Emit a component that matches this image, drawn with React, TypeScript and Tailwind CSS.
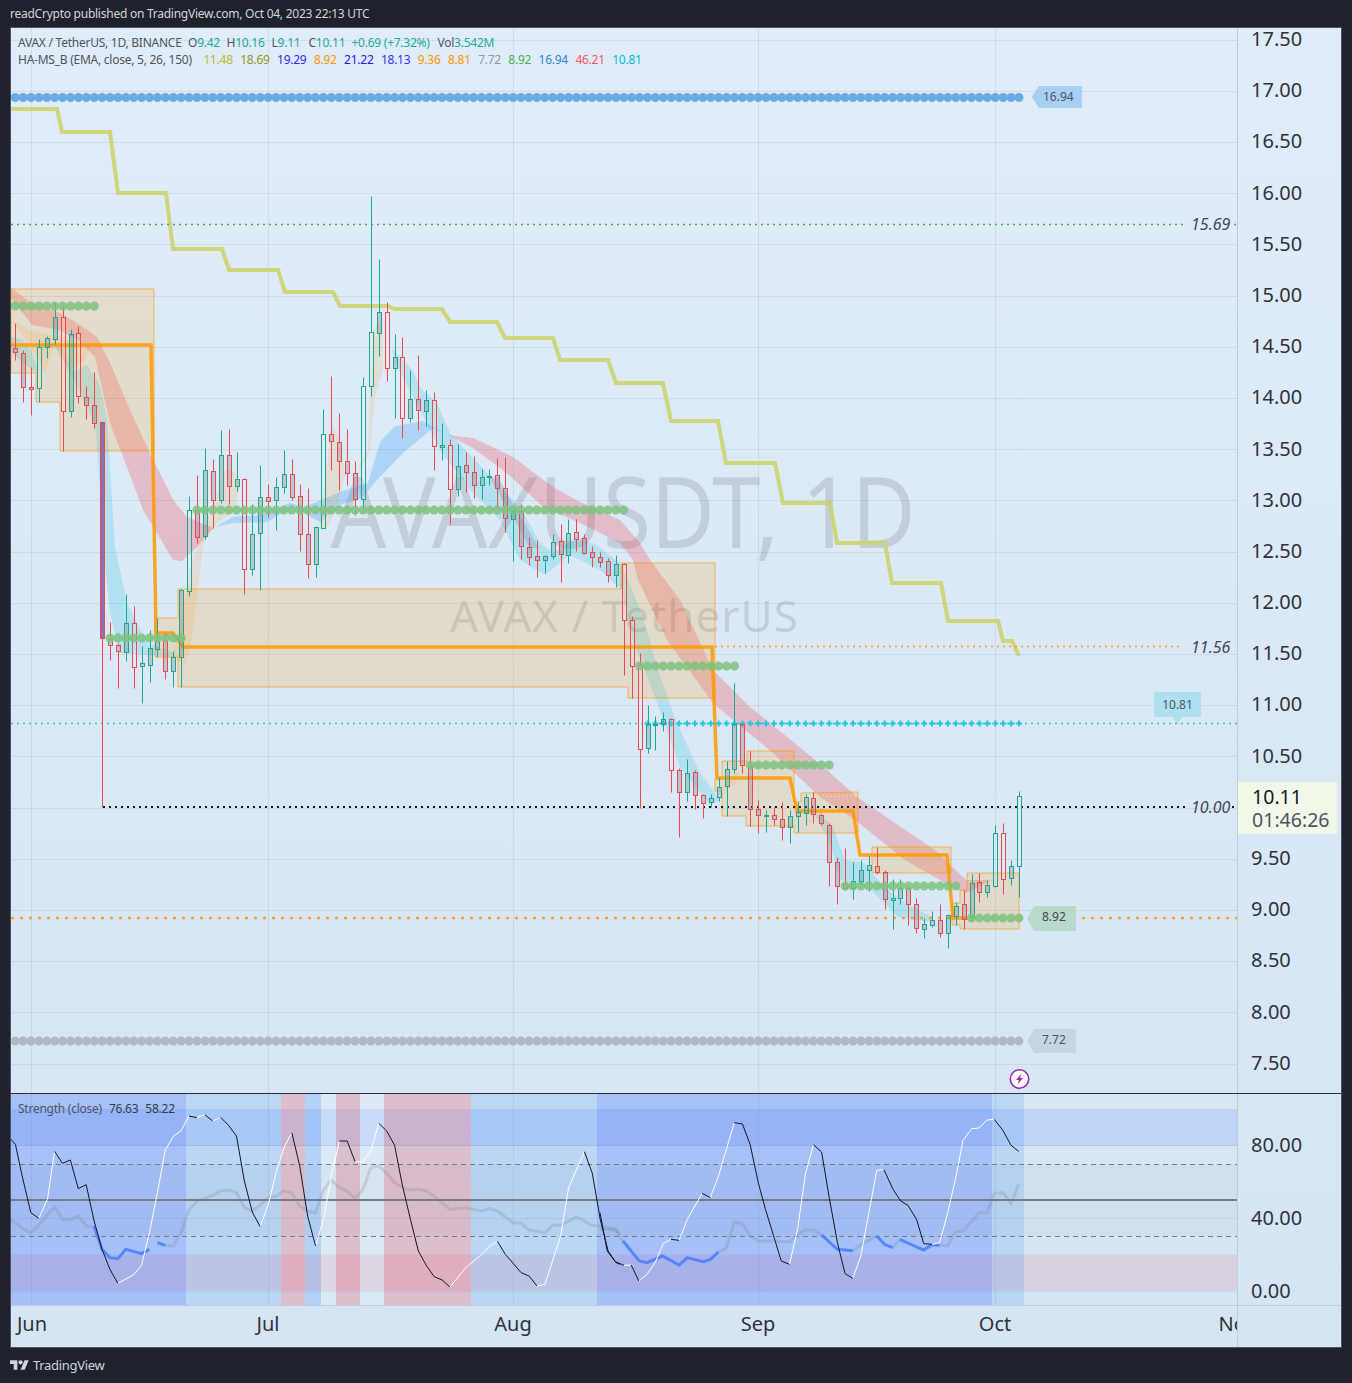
import React from "react";

type C = [number, number, number, number, number];
// colour (0 green, 1 red), wick top, body top, body bottom, wick bottom; first entry is day index -2
const raw: C[] = [
[1,323,348,352,360],[1,350,353,387,402],[1,367,387,389,415],[0,339,347,388,402],[0,336,338,347,358],[0,302,317,339,344],[1,305,317,411,451],[0,329,334,411,417],[1,326,333,396,403],[1,386,397,405,419],[1,372,405,423,428],
[1,422,422,638,807],[1,622,639,645,660],[1,643,645,651,688],[0,594,623,652,661],[1,606,623,667,688],[0,646,663,666,703],[0,630,648,665,682],[0,618,641,649,657],[1,633,640,671,679],[0,651,657,671,687],[0,589,590,657,687],
[0,496,510,591,596],[1,475,510,537,543],[0,448,470,536,539],[1,459,471,500,528],[0,430,455,500,503],[1,429,455,486,504],[0,452,479,486,491],[1,478,479,569,594],[0,504,534,569,575],[0,465,497,533,590],[1,484,497,501,517],[0,477,487,500,530],[0,450,474,487,493],[1,459,474,497,500],[1,484,496,534,551],[1,488,534,564,578],[0,526,527,564,577],[0,409,434,528,528],[1,376,434,441,470],[1,413,442,461,490],
[1,429,461,473,485],[1,461,473,499,515],[0,377,386,499,511],[0,196,332,386,396],[0,259,312,333,356],[1,302,312,368,381],[0,334,357,368,418],[1,337,357,418,438],[0,370,399,418,422],[1,355,399,410,430],[0,390,400,411,426],[1,392,400,446,470],[0,423,445,447,460],[1,439,445,489,524],[0,444,466,489,496],[1,452,465,472,492],[1,456,472,485,498],[0,469,477,485,499],[0,469,476,477,485],[1,458,475,488,508],[1,457,488,518,532],[0,510,511,519,561],[1,504,511,546,559],[1,537,547,557,565],[1,540,556,560,577],[0,555,556,560,573],[0,534,542,556,559],[1,524,541,554,582],[0,519,533,555,563],[1,519,532,539,551],[1,534,538,553,554],[1,546,552,557,567],[1,552,557,562,567],[1,558,561,575,582],[0,555,564,575,587],
[1,563,564,620,675],[1,616,620,666,698],[1,653,665,749,808],[0,705,724,748,753],[0,716,724,725,750],[0,712,719,724,731],[1,718,719,770,792],[1,768,770,792,837],[0,759,773,792,801],[1,770,772,795,809],[1,794,795,803,818],[0,794,798,802,807],[0,778,787,797,801],[0,761,769,786,816],[0,683,724,769,773],[1,723,724,765,773],[1,751,766,809,826],[1,800,809,815,833],[0,810,815,816,832],[1,807,815,819,825],[1,802,819,827,840],[0,810,816,827,843],[0,802,812,816,832],[0,794,797,813,825],[1,792,798,814,823],[1,813,815,823,825],
[1,825,827,865,890],[1,860,865,890,908],[1,851,888,892,894],[0,865,884,892,903],[0,863,873,884,888],[0,859,868,873,895],[1,850,869,875,877],[1,873,875,903,913],[0,882,902,904,933],[0,882,892,902,908],[1,889,892,908,929],[1,902,908,932,937],[0,922,928,933,942],[0,915,924,929,931],[1,908,924,937,941],[0,918,919,937,953],[0,906,910,920,929],[1,894,908,923,933],[0,877,886,921,924],[1,876,885,896,906],[0,883,889,896,901],[0,827,836,890,891],[1,825,836,882,898],[0,863,869,881,889],[0,793,798,869,901],
];

const dayX = (i: number) => 31 + 7.904 * i;
const greyBodies = new Set([5, 19, 22, 24, 25, 34, 48, 54, 68, 78, 82, 88, 89, 90, 91]);
const fixY = (i: number, y: number) => (i >= 101 ? 690 + (y - 690) * 0.9823 : y);

function Candles() {
  return (
    <g>
      {raw.map((c, k) => {
        const i = k - 2;
        const x = Math.round(dayX(i)) + 0.5;
        const col = c[0] ? "#f0474f" : "#1ea692";
        const [wt, bt, bb, wb] = [c[1], c[2], c[3], c[4]].map((v) => Math.round(fixY(i, v)) + 0.5);
        const hollow = bb - bt >= 38 && !greyBodies.has(i);
        const fill = i === 9 ? "#7f74b8" : hollow ? "rgba(255,255,255,.1)" : "rgba(120,123,134,.32)";
        return (
          <g key={k}>
            <line x1={x} x2={x} y1={wt} y2={bt} stroke={col} />
            <line x1={x} x2={x} y1={bb} y2={wb} stroke={col} />
            <rect x={x - 2} y={bt} width={4} height={Math.max(bb - bt, 1)} fill={fill} stroke={col} />
          </g>
        );
      })}
    </g>
  );
}

const range = (a: number, b: number) => Array.from({ length: b - a + 1 }, (_, k) => a + k);

function Dots({ a, b, y, r, fill }: { a: number; b: number; y: number; r: number; fill: string }) {
  return (
    <g fill={fill}>
      {range(a, b).map((i) => (
        <circle key={i} cx={dayX(i)} cy={y} r={r} />
      ))}
    </g>
  );
}

const RED1 = "11,288 33,304 60,313 83,327 97,337 110,363 130,410 150,453 173,500 187,517 213,528 197,547 182,561 173,560 143,510 127,467 110,423 95,357 80,342 60,330 43,327 32,325 11,298";
const RED2 = "448,435 473,438 513,457 553,487 580,502 620,520 640,543 650,560 680,600 713,670 750,707 797,745 827,770 857,797 895,823 935,850 966,880 993,880 986,883 966,893 952,887 905,860 854,819 820,797 773,753 733,720 713,703 667,640 638,580 633,560 620,543 580,523 543,507 507,473 473,448";
const CY1 = "87,365 100,385 107,420 115,547 127,603 147,643 173,652 176,657 120,653 110,613 103,547 100,487 95,423 70,373 55,347 62,345 72,372";
const CY0 = "11,337 22,339 32,352 40,375 25,365 11,352";
const CY2 = "392,348 412,370 422,390 437,403 450,433 487,473 522,510 540,543 553,553 573,540 593,543 620,563 627,577 643,617 657,667 677,723 700,773 720,800 710,805 680,767 657,703 633,640 622,590 600,570 570,555 545,575 520,560 500,520 470,490 440,450 420,410 395,362";
const CY3 = "813,807 833,827 845,860 864,863 884,887 905,903 932,917 928,922 898,917 871,890 840,880 830,843 815,815";
const BLUE = "215,527 233,517 260,515 290,503 305,507 340,492 368,483 380,442 395,426 423,421 448,435 433,428 403,453 377,480 362,498 340,505 320,522 293,507 267,522 233,523";
const PEACH = [
  "172,657 181,620 190,570 203,530 215,500 225,470 235,472 240,485 235,510 215,525 203,545 197,600 190,650 185,665",
  "319,525 325,480 332,425 340,440 345,475 336,510 325,530",
  "358,467 368,450 373,330 383,317 383,370 375,397 370,450 360,470",
  "11,320 30,345 45,372 55,345 70,370 85,360 90,345 30,330",
  "722,786 740,770 735,785 725,790",
];
const BOXES = [
  "11,289 154,289 154,451 60,451 60,402 36,402 36,373 11,373",
  "155,618 178,618 178,589 621,589 621,563 715,563 715,698 628,698 628,687 178,687 178,657 155,657",
  "715,778 722,778 722,761 747,761 747,751 794,751 794,802 801,802 801,793 858,792 858,833 794,833 794,826 746,826 746,816 722,816 722,791 715,791",
  "872,847 951,847 951,873 872,873",
  "952,903 960,903 960,890 967,890 967,873 1019,873 1019,925 1019,929 960,929 960,925 952,925",
];
const ORANGE = "11,345 151,345 156,633 173,633 183,647 712,647 717,778 790,778 797,811 853,811 860,855 947,855 953,918 968,918";
const OLIVE = "11,109 57,109 62,132 110,132 118,193 166,193 173,249 222,249 229,270 278,270 285,292 333,292 340,306 388,306 394,309 442,309 450,322 497,322 505,338 553,338 560,360 608,360 616,383 663,383 671,421 718,421 726,463 775,463 783,503 830,503 837,543 885,543 892,583 941,583 948,621 998,621 1003,641 1012,641 1019,656";

function MainChart() {
  const grid = range(0, 21).map((k) => 39.5 + k * 51.2);
  return (
    <svg viewBox="11 28 1227 1065" width={1227} height={1065} className="block">
      {grid.map((y) => (
        <line key={y} x1={11} x2={1238} y1={Math.round(y) + 0.5} y2={Math.round(y) + 0.5} stroke="#2a2e39" strokeOpacity={0.08} />
      ))}
      {[31, 268, 513, 758, 995].map((x) => (
        <line key={x} x1={x + 0.5} x2={x + 0.5} y1={28} y2={1093} stroke="#2a2e39" strokeOpacity={0.08} />
      ))}
      <text x={623} y={548} textAnchor="middle" fontSize={98} textLength={585} lengthAdjust="spacingAndGlyphs" fill="#787b86" fillOpacity={0.25} fontFamily="'Noto Sans',sans-serif">AVAXUSDT, 1D</text>
      <text x={624} y={632} textAnchor="middle" fontSize={44} textLength={348} fill="#787b86" fillOpacity={0.25} fontFamily="'Noto Sans',sans-serif">AVAX / TetherUS</text>

      <polygon points={CY0} fill="#00bcd4" fillOpacity={0.18} />
      <polygon points={CY1} fill="#00bcd4" fillOpacity={0.18} />
      <polygon points={CY2} fill="#00bcd4" fillOpacity={0.18} />
      <polygon points={CY3} fill="#00bcd4" fillOpacity={0.18} />
      <polygon points={BLUE} fill="#2196f3" fillOpacity={0.25} />
      {PEACH.map((p) => (
        <polygon key={p} points={p} fill="#ff9800" fillOpacity={0.14} />
      ))}
      <polygon points={RED1} fill="#f23645" fillOpacity={0.25} />
      <polygon points={RED2} fill="#f23645" fillOpacity={0.25} />
      {BOXES.map((p) => (
        <polygon key={p} points={p} fill="#ff9800" fillOpacity={0.17} stroke="#ff9800" strokeOpacity={0.65} />
      ))}
      <polyline points={ORANGE} fill="none" stroke="#ff9800" strokeOpacity={0.85} strokeWidth={3.5} />
      <polyline points={OLIVE} fill="none" stroke="#ccd36b" strokeOpacity={0.9} strokeWidth={4} />

      <line x1={11} x2={1185} y1={224.5} y2={224.5} stroke="#43ae50" strokeWidth={1.5} strokeDasharray="2 4" />
      <line x1={1234} x2={1238} y1={224.5} y2={224.5} stroke="#43ae50" strokeWidth={1.5} strokeDasharray="2 4" />
      <line x1={715} x2={1183} y1={646.5} y2={646.5} stroke="#ff9800" strokeWidth={1.5} strokeDasharray="2 4" />
      <line x1={11} x2={1238} y1={723.5} y2={723.5} stroke="#26c6da" strokeWidth={1.5} strokeDasharray="2 4" />
      <line x1={11} x2={1238} y1={796} y2={796} stroke="#ffffff" strokeOpacity={0.6} strokeDasharray="1 3" />
      <line x1={103} x2={1185} y1={807} y2={807} stroke="#131722" strokeWidth={2} strokeDasharray="2 4" />
      <line x1={1232} x2={1238} y1={807} y2={807} stroke="#131722" strokeWidth={2} strokeDasharray="2 4" />
      <line x1={11} x2={1238} y1={918} y2={918} stroke="#f5a233" strokeWidth={2.5} strokeDasharray="3 6" />

      <Dots a={-3} b={125} y={97.5} r={4.5} fill="#6caae3" />
      <Dots a={-3} b={125} y={1041} r={4.5} fill="#b1b8c3" />
      <g stroke="#26c6da" strokeWidth={2}>
        {range(78, 125).map((i) => (
          <g key={i}>
            <line x1={dayX(i) - 3} x2={dayX(i) + 3} y1={723.5} y2={723.5} />
            <line x1={dayX(i)} x2={dayX(i)} y1={720.5} y2={726.5} />
          </g>
        ))}
      </g>

      <Candles />

      <g fillOpacity={0.85}>
        <Dots a={-3} b={8} y={306} r={4.5} fill="#7cc27e" />
        <Dots a={10} b={19} y={638} r={4.5} fill="#7cc27e" />
        <Dots a={21} b={75} y={510} r={4.5} fill="#7cc27e" />
        <Dots a={77} b={89} y={666} r={4.5} fill="#7cc27e" />
        <Dots a={91} b={101} y={765} r={4.5} fill="#7cc27e" />
        <Dots a={103} b={117} y={886} r={4.5} fill="#7cc27e" />
        <Dots a={119} b={125} y={918} r={4.5} fill="#7cc27e" />
      </g>

      <g fontFamily="'Noto Sans',sans-serif" fontStyle="italic" fontSize={16} fill="#434651">
        <text x={1191} y={230}>15.69</text>
        <text x={1191} y={653}>11.56</text>
        <text x={1191} y={813}>10.00</text>
      </g>

      <circle cx={1019.5} cy={1079} r={9.2} fill="#fff" stroke="#9c27b0" strokeWidth={1.6} />
      <path d="M1021.5 1073.5 L1016 1080 H1019 L1017.5 1084.5 L1023 1078 H1020 Z" fill="#9c27b0" />
    </svg>
  );
}

const z6 = (a: number[][]) => a.map(([x, y]) => [x / 2.529, 1085 + y / 3]);
const z7 = (a: number[][]) => a.map(([x, y]) => [600 + x / 2.085, 1085 + y / 3]);
const pts = (a: number[][]) => a.map((p) => p.join(",")).join(" ");

const BLACK: number[][][] = [
  z6([[26,158],[39,175],[56,270],[78,380],[98,397]]),
  z6([[138,196],[158,232],[178,222],[198,308],[218,296],[238,405],[258,490],[278,550],[298,592]]),
  z6([[478,90],[498,95]]), z6([[518,86],[538,105]]),
  z6([[558,94],[578,118],[598,150],[618,285],[638,378],[658,422]]),
  z6([[738,140],[758,240],[778,390],[798,480]]),
  z6([[858,165],[878,165],[898,227]]),
  z6([[958,112],[978,135],[998,178],[1018,300],[1038,400],[1058,495],[1078,538],[1098,572],[1118,582],[1138,603]]),
  z6([[1258,466],[1278,505],[1318,560],[1338,570],[1358,600]]),
  z6([[1478,197],[1498,262],[1518,400],[1538,495],[1558,530],[1568,535]]),
  z7([[0,380],[15,495],[32,527],[50,538]]),
  z7([[65,537],[81,585]]), z7([[148,460],[165,463]]), z7([[213,322],[230,335]]),
  z7([[280,110],[297,114],[313,175],[330,290],[345,370],[378,525],[395,535]]),
  z7([[445,176],[462,198],[478,335],[495,470],[511,563],[527,577]]),
  z7([[592,251],[611,310],[627,345],[642,358],[660,400],[675,473],[692,475]]),
  z7([[822,100],[840,133],[857,178],[873,196]]),
];
const WHITE: number[][][] = [
  z6([[98,397],[120,340],[138,196]]),
  z6([[298,592],[338,566],[358,538],[378,440],[398,320],[418,192],[438,152],[458,134],[478,90]]),
  z6([[498,95],[518,86]]), z6([[538,105],[558,94]]),
  z6([[658,422],[680,350],[698,260],[718,185],[738,140]]),
  z6([[798,480],[818,400],[838,270],[858,165]]),
  z6([[898,227],[918,227],[938,195],[958,112]]),
  z6([[1138,603],[1178,545],[1218,505],[1238,480],[1258,466]]),
  z6([[1358,600],[1378,595],[1418,450],[1438,305],[1478,197]]),
  z7([[50,538],[65,537]]),
  z7([[81,585],[98,565],[115,530],[132,472],[148,460]]),
  z7([[165,463],[182,400],[213,322]]),
  z7([[230,335],[247,270],[280,110]]),
  z7([[395,535],[412,430],[428,265],[445,176]]),
  z7([[527,577],[544,510],[560,385],[577,253],[592,251]]),
  z7([[692,475],[708,470],[725,380],[741,280],[757,163],[775,128],[790,126],[807,102],[822,100]]),
];
const GREY: number[][][] = [
  z6([[26,400],[60,430],[78,440],[100,415],[138,362],[158,400],[178,402],[198,390],[218,420],[238,425]]),
  z6([[418,478],[438,480],[458,440],[478,372],[498,345],[538,328],[558,315],[578,312],[598,320],[618,365],[638,375],[660,355],[680,332],[698,332],[718,315],[738,322],[758,360],[778,375],[798,380],[818,312],[838,282],[858,305],[878,315],[898,337],[918,310],[938,245],[958,240],[978,262],[998,290],[1018,305],[1038,312],[1058,310],[1078,315],[1098,330],[1138,370],[1178,365],[1218,375],[1238,368],[1258,375],[1298,410],[1318,412],[1338,432],[1378,440],[1398,418],[1418,418],[1458,393],[1498,418],[1518,420],[1558,430],[1568,445]]),
  z7([[0,428],[32,432],[48,465]]),
  z7([[247,498],[263,487],[280,408],[297,413],[313,450],[330,465],[362,465],[395,468],[412,445],[428,432],[445,432],[462,447]]),
  z7([[527,494],[545,475],[577,450]]),
  z7([[610,485],[625,460]]),
  z7([[708,478],[725,480],[741,437],[757,435],[790,380],[807,380],[822,322],[840,320],[857,352],[873,295]]),
];
const BLUELINE: number[][][] = [
  z6([[238,420],[258,490],[278,515],[298,518],[318,490],[358,503],[378,490]]),
  z6([[398,470],[418,478]]),
  z7([[48,465],[82,525],[98,530],[130,510],[165,537],[182,515],[215,527],[230,520],[247,498]]),
  z7([[462,447],[495,490],[527,494]]),
  z7([[577,450],[593,475],[610,485]]),
  z7([[625,460],[660,483],[675,492],[692,476],[708,478]]),
];
const ZONES: [number, number, string, number][] = [
  [11, 186, "#2962ff", 0.28], [186, 281, "#2182ff", 0.15], [281, 305, "#f23645", 0.22], [305, 321, "#2182ff", 0.2],
  [321, 336, "#ffffff", 0.15], [336, 360, "#f23645", 0.22], [360, 384, "#ffffff", 0.15], [384, 471, "#f23645", 0.22],
  [471, 597, "#2182ff", 0.15], [597, 992, "#2962ff", 0.28], [992, 1024, "#2182ff", 0.15],
];

function SubChart() {
  return (
    <svg viewBox="11 1093 1227 211" width={1227} height={211} className="block">
      <rect x={11} y={1163} width={1227} height={72} fill="#787b86" fillOpacity={0.05} />
      <rect x={11} y={1108} width={1227} height={37} fill="#2962ff" fillOpacity={0.13} />
      <rect x={11} y={1253.5} width={1227} height={36} fill="#f23645" fillOpacity={0.12} />
      {ZONES.map(([a, b, c, o]) => (
        <rect key={a} x={a} y={1093} width={b - a} height={211} fill={c} fillOpacity={o} />
      ))}
      {[31, 268, 513, 758, 995].map((x) => (
        <line key={x} x1={x + 0.5} x2={x + 0.5} y1={1093} y2={1304} stroke="#2a2e39" strokeOpacity={0.07} />
      ))}
      {[1144.5, 1217.5, 1290.5].map((y) => (
        <line key={y} x1={11} x2={1238} y1={y} y2={y} stroke="#2a2e39" strokeOpacity={0.07} />
      ))}
      <line x1={11} x2={1238} y1={1163.5} y2={1163.5} stroke="#787b86" strokeDasharray="5 4" />
      <line x1={11} x2={1238} y1={1235.5} y2={1235.5} stroke="#787b86" strokeDasharray="5 4" />
      <line x1={11} x2={1238} y1={1199} y2={1199} stroke="#787b86" strokeWidth={2} />
      {GREY.map((l, k) => (
        <polyline key={k} points={pts(l)} fill="none" stroke="#787b86" strokeOpacity={0.22} strokeWidth={3} />
      ))}
      {BLUELINE.map((l, k) => (
        <polyline key={k} points={pts(l)} fill="none" stroke="#4d7ffb" strokeOpacity={0.9} strokeWidth={3} />
      ))}
      {WHITE.map((l, k) => (
        <polyline key={k} points={pts(l)} fill="none" stroke="#ffffff" strokeWidth={1} />
      ))}
      {BLACK.map((l, k) => (
        <polyline key={k} points={pts(l)} fill="none" stroke="#131722" strokeWidth={1} />
      ))}
    </svg>
  );
}

const PRICES = ["17.50","17.00","16.50","16.00","15.50","15.00","14.50","14.00","13.50","13.00","12.50","12.00","11.50","11.00","10.50","","9.50","9.00","8.50","8.00","7.50"];
const LEGEND2: [string, string][] = [
  ["11.48","text-[#b5bd2d]"],["18.69","text-[#93951c]"],["19.29","text-[#2a2aff]"],["8.92","text-[#ff9800]"],["21.22","text-[#1a1aff]"],["18.13","text-[#3333ff]"],["9.36","text-[#ff9800]"],["8.81","text-[#ff9800]"],["7.72","text-[#9598a1]"],["8.92","text-[#4caf50]"],["16.94","text-[#2f86d6]"],["46.21","text-[#f7525f]"],["10.81","text-[#00bcd4]"],
];

export default function App() {
  return (
    <div className="w-[1352px] h-[1383px] bg-[#1e222d] flex flex-col font-['Noto_Sans',sans-serif] overflow-hidden">
      <div className="h-[27px] pl-[10px] pt-[1px] flex items-center text-[12px] tracking-[-0.25px] text-[#d1d4dc]">
        readCrypto published on TradingView.com, Oct 04, 2023 22:13 UTC
      </div>
      <div className="ml-[10px] w-[1332px] h-[1321px] border border-[#50535e] flex flex-col bg-linear-to-b from-[#e0ecf9] to-[#d5e5f4]">
        <div className="h-[1065px] flex">
          <div className="relative w-[1227px] overflow-hidden">
            <MainChart />
            <div className="absolute left-[7px] top-[6px] text-[12px] tracking-[-0.25px] leading-[17px] text-[#50535e]">
              <div className="flex whitespace-nowrap">
                <span className="w-[170px]">AVAX / TetherUS, 1D, BINANCE</span>
                <span className="w-[38.5px]">O<span className="text-[#22ab94]">9.42</span></span>
                <span className="w-[45px]">H<span className="text-[#22ab94]">10.16</span></span>
                <span className="w-[37px]">L<span className="text-[#22ab94]">9.11</span></span>
                <span className="w-[43px]">C<span className="text-[#22ab94]">10.11</span></span>
                <span className="w-[86px] text-[#22ab94]">+0.69 (+7.32%)</span>
                <span>Vol<span className="text-[#22ab94]">3.542M</span></span>
              </div>
              <div className="flex items-center whitespace-nowrap gap-[7.4px]">
                <span className="w-[178px]">HA-MS_B (EMA, close, 5, 26, 150)</span>
                {LEGEND2.map(([t, c], k) => (
                  <span key={k} className={c}>{t}</span>
                ))}
              </div>
            </div>
            <div className="absolute left-[1021px] top-[58px] w-[50px] h-[22px] pl-[11px] bg-[#a6cff2] flex items-center text-[12px] text-[#50535e] [clip-path:polygon(0_50%,7px_0,100%_0,100%_100%,7px_100%)]">16.94</div>
            <div className="absolute left-[1016px] top-[878px] w-[49px] h-[25px] pl-[15px] pb-[4px] bg-[#b9d9cb] flex items-center text-[12px] text-[#434651] [clip-path:polygon(0_50%,7px_0,100%_0,100%_100%,7px_100%)]">8.92</div>
            <div className="absolute left-[1016px] top-[1001px] w-[49px] h-[24px] pl-[15px] pb-[2px] bg-[#c8d5e3] flex items-center text-[12px] text-[#50535e] [clip-path:polygon(0_50%,7px_0,100%_0,100%_100%,7px_100%)]">7.72</div>
            <div className="absolute left-[1143px] top-[664px] w-[47px] h-[32px] pb-[7px] bg-[#aee0ef] flex items-center justify-center text-[12px] text-[#50535e] [clip-path:polygon(0_0,100%_0,100%_25px,60%_25px,50%_100%,40%_25px,0_25px)]">10.81</div>
          </div>
          <div className="relative w-[104px] border-l border-[#bfcddb] overflow-hidden">
            <div className="pl-[13px] flex flex-col gap-[29.2px] text-[20px] leading-[22px] text-[#2f323c]">
              {PRICES.map((p, k) => (
                <div key={k} className="h-[22px] shrink-0">{p}</div>
              ))}
            </div>
            <div className="absolute left-0 top-[754px] w-[99px] h-[52px] pl-[14px] bg-[#f1f7e9] flex flex-col justify-center text-[19.5px] leading-[23px]">
              <span className="text-[#131722]">10.11</span>
              <span className="text-[#50535e]">01:46:26</span>
            </div>
          </div>
        </div>
        <div className="h-px bg-[#2a2e39]" />
        <div className="h-[211px] flex">
          <div className="relative w-[1227px] overflow-hidden">
            <SubChart />
            <div className="absolute left-[7px] top-[6px] flex gap-[7px] text-[12px] tracking-[-0.25px] leading-[17px] text-[#50535e] whitespace-nowrap">
              <span>Strength (close)</span>
              <span className="text-[#363a45]">76.63</span>
              <span className="text-[#363a45]">58.22</span>
            </div>
          </div>
          <div className="w-[104px] border-l border-[#bfcddb] pt-[39px] pl-[13px] flex flex-col gap-[49px] text-[20px] leading-[24px] text-[#2f323c]">
            <div className="h-[24px] shrink-0">80.00</div>
            <div className="h-[24px] shrink-0">40.00</div>
            <div className="h-[24px] shrink-0">0.00</div>
          </div>
        </div>
        <div className="flex-1 flex border-t border-[#bfcddb] bg-[#d5e5f4]">
          <div className="w-[1227px] overflow-hidden flex items-center text-[20px] text-[#2f323c] pb-[5px]">
            <div className="shrink-0 w-[60px] text-center ml-[-9px]">Jun</div>
            <div className="shrink-0 w-[60px] text-center ml-[176px]">Jul</div>
            <div className="shrink-0 w-[60px] text-center ml-[185px]">Aug</div>
            <div className="shrink-0 w-[60px] text-center ml-[185px]">Sep</div>
            <div className="shrink-0 w-[60px] text-center ml-[177px]">Oct</div>
            <div className="shrink-0 w-[60px] text-center ml-[182px]">Nov</div>
          </div>
          <div className="w-[104px] border-l border-[#bfcddb]" />
        </div>
      </div>
      <div className="flex-1 pl-[10px] flex items-center gap-[4px] text-[13px] tracking-[-0.3px] text-[#d1d4dc]">
        <svg viewBox="0 0 36 28" width={19} height={15} fill="#d1d4dc">
          <path d="M14 22H7V11H0V4h14v18zM28 22h-8l7.5-18h8L28 22z" />
          <circle cx="20" cy="8" r="4" />
        </svg>
        <span>TradingView</span>
      </div>
    </div>
  );
}
